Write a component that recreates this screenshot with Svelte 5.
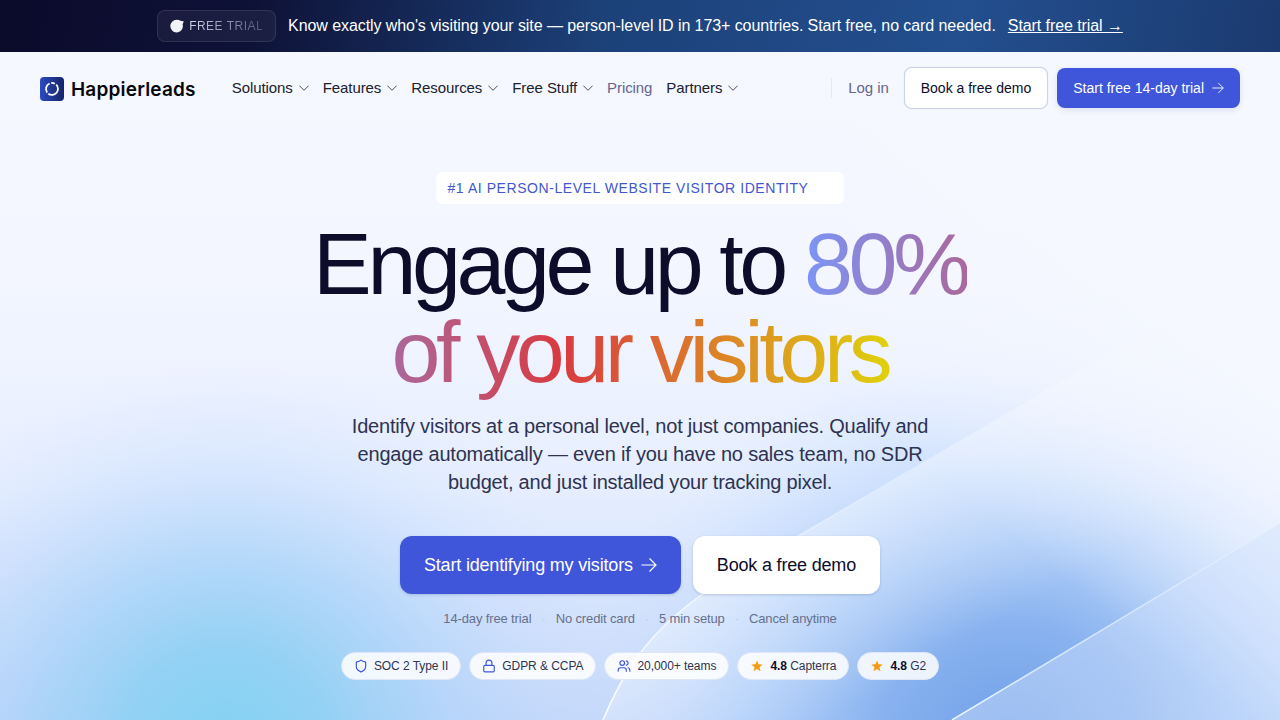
<script lang="ts">
  type Badge = { icon: "shield" | "lock" | "users" | "star"; label: string; score?: string };

  const navItems = [
    { label: "Solutions", menu: true },
    { label: "Features", menu: true },
    { label: "Resources", menu: true },
    { label: "Free Stuff", menu: true },
    { label: "Pricing", menu: false },
    { label: "Partners", menu: true },
  ];

  const perks = ["14-day free trial", "No credit card", "5 min setup", "Cancel anytime"];

  const badges: Badge[] = [
    { icon: "shield", label: "SOC 2 Type II" },
    { icon: "lock", label: "GDPR & CCPA" },
    { icon: "users", label: "20,000+ teams" },
    { icon: "star", label: "Capterra", score: "4.8" },
    { icon: "star", label: "G2", score: "4.8" },
  ];
</script>

{#snippet arrow(size: number)}
  <svg class="arrow" width={size} height={size} viewBox="0 0 16 16" aria-hidden="true">
    <path d="M.5 8h14.500M8.500 1.500 15 8l-6.500 6.500" />
  </svg>
{/snippet}

<div class="page">
  <aside class="promo">
    <span class="promo-tag">
      <svg width="14" height="14" viewBox="0 0 14 14" aria-hidden="true">
        <path d="M6.500.800A6.300 6.300 0 1 0 12.900 7.500c0-.9 0-1.300-.3-2l1.200-3.300-2.600-.3C9.600 1.200 8 .8 6.500.8z" fill="#f2f3f7" />
      </svg>
      <span class="promo-tag-text">FREE TRIAL</span>
    </span>
    <p>Know exactly who's visiting your site — person-level ID in 173+ countries. Start free, no card needed.</p>
    <a href="#trial">Start free trial →</a>
  </aside>

  <div class="stage">
    <svg class="backdrop" viewBox="0 0 1280 668" preserveAspectRatio="none" aria-hidden="true">
      <defs>
        <radialGradient id="cyan">
          <stop offset="0" stop-color="#83d2f2" />
          <stop offset=".25" stop-color="#8dd0f3" stop-opacity=".9" />
          <stop offset=".5" stop-color="#9fd0f8" stop-opacity=".6" />
          <stop offset=".75" stop-color="#b4d4fb" stop-opacity=".25" />
          <stop offset="1" stop-color="#cfe0ff" stop-opacity="0" />
        </radialGradient>
        <radialGradient id="blue">
          <stop offset="0" stop-color="#6f9fe8" />
          <stop offset=".3" stop-color="#7dabed" stop-opacity=".85" />
          <stop offset=".65" stop-color="#a3c9f9" stop-opacity=".5" />
          <stop offset="1" stop-color="#cfe3ff" stop-opacity="0" />
        </radialGradient>
        <linearGradient id="base" x1="0" y1="0" x2="0" y2="1">
          <stop offset="0" stop-color="#f5f8ff" />
          <stop offset=".35" stop-color="#f3f6ff" />
          <stop offset=".65" stop-color="#e6eeff" />
          <stop offset="1" stop-color="#c4d8fa" />
        </linearGradient>
        <linearGradient id="veil" gradientUnits="userSpaceOnUse" x1="860" y1="448" x2="950" y2="600">
          <stop offset="0" stop-color="#f5f8ff" stop-opacity=".45" />
          <stop offset="1" stop-color="#f5f8ff" stop-opacity="0" />
        </linearGradient>
        <linearGradient id="glow" gradientUnits="userSpaceOnUse" x1="1260" y1="320" x2="1080" y2="540">
          <stop offset="0" stop-color="#f5f8ff" />
          <stop offset=".5" stop-color="#f4f7ff" stop-opacity=".55" />
          <stop offset="1" stop-color="#f4f7ff" stop-opacity="0" />
        </linearGradient>
        <linearGradient id="edge" gradientUnits="userSpaceOnUse" x1="620" y1="668" x2="960" y2="390">
          <stop offset="0" stop-color="#fff" stop-opacity=".9" />
          <stop offset="1" stop-color="#fff" stop-opacity="0" />
        </linearGradient>
        <linearGradient id="edge-low" gradientUnits="userSpaceOnUse" x1="952" y1="668" x2="1290" y2="465">
          <stop offset="0" stop-color="#e9f6ff" />
          <stop offset="1" stop-color="#e9f6ff" stop-opacity=".3" />
        </linearGradient>
      </defs>
      <rect width="1280" height="668" fill="url(#base)" />
      <ellipse cx="225" cy="690" rx="390" ry="380" fill="url(#cyan)" />
      <ellipse cx="1010" cy="690" rx="430" ry="400" fill="url(#blue)" />
      <rect width="1280" height="668" fill="url(#glow)" />
      <path d="M603 668C632 600 665 553 800 483L1280 200V471L952 668z" fill="url(#veil)" />
      <path d="M603 668C632 600 665 553 800 483L1280 200" fill="none" stroke="url(#edge)" stroke-width="1.500" />
      <path d="M952 668L1280 471V668z" fill="#d3e3fc" fill-opacity=".45" />
      <path d="M952 668L1280 471" fill="none" stroke="url(#edge-low)" stroke-width="1.500" />
    </svg>

    <header class="topbar">
      <a class="brand" href="#home">
        <svg width="24" height="24" viewBox="0 0 24 24" aria-hidden="true">
          <defs>
            <linearGradient id="mark" x1="0" y1="0" x2="1" y2="0">
              <stop offset="0" stop-color="#2c4bc0" />
              <stop offset="1" stop-color="#152468" />
            </linearGradient>
          </defs>
          <rect width="24" height="24" rx="4" fill="url(#mark)" />
          <path
            d="M9.600 6.500A6 6 0 0 0 7.200 15.600M8.300 16.700A6 6 0 0 0 16.200 7.700M14.800 6.700A6 6 0 0 0 11.300 6"
            fill="none"
            stroke="#fff"
            stroke-width="1.800"
          />
        </svg>
        <span>Happierleads</span>
      </a>
      <nav aria-label="Main">
        {#each navItems as item}
          {#if item.menu}
            <button type="button" class="nav-item">
              {item.label}
              <svg width="10" height="6" viewBox="0 0 10 6" aria-hidden="true"><path d="M.4.700 5 5.300 9.600.700" /></svg>
            </button>
          {:else}
            <a class="nav-item muted" href="#pricing">{item.label}</a>
          {/if}
        {/each}
      </nav>
      <div class="actions">
        <a class="login" href="#login">Log in</a>
        <button type="button" class="btn light">Book a free demo</button>
        <button type="button" class="btn primary">Start free 14-day trial {@render arrow(12)}</button>
      </div>
    </header>

    <main class="hero">
      <div class="eyebrow">#1 AI PERSON-LEVEL WEBSITE VISITOR IDENTITY</div>
      <h1>Engage up to <span>80%<br />of your visitors</span></h1>
      <p class="lead">
        Identify visitors at a personal level, not just companies. Qualify and engage automatically — even if you have
        no sales team, no SDR budget, and just installed your tracking pixel.
      </p>
      <div class="cta">
        <button type="button" class="btn large primary">Start identifying my visitors {@render arrow(16)}</button>
        <button type="button" class="btn large light">Book a free demo</button>
      </div>
      <ul class="perks">
        {#each perks as perk}
          <li>{perk}</li>
        {/each}
      </ul>
      <ul class="badges">
        {#each badges as badge}
          <li>
            <svg class={badge.icon} width="14" height="14" viewBox="0 0 24 24" aria-hidden="true">
              {#if badge.icon === "shield"}
                <path d="M20 13c0 5-3.500 7.500-7.700 9a1 1 0 0 1-.6 0C7.500 20.500 4 18 4 13V6a1 1 0 0 1 1-1c2 0 4.500-1.200 6.200-2.700a1.200 1.200 0 0 1 1.600 0C14.500 3.800 17 5 19 5a1 1 0 0 1 1 1z" />
              {:else if badge.icon === "lock"}
                <rect x="3" y="11" width="18" height="11" rx="2" />
                <path d="M7 11V7a5 5 0 0 1 10 0v4" />
              {:else if badge.icon === "users"}
                <circle cx="9" cy="7" r="4" />
                <path d="M2 21v-2a4 4 0 0 1 4-4h6a4 4 0 0 1 4 4v2M16 3.100a4 4 0 0 1 0 7.800M22 21v-2a4 4 0 0 0-3-3.900" />
              {:else}
                <path d="M12 2.500l2.600 6.700 7.100.4-5.500 4.600L18 21.200 12 17.300 6 21.200l1.800-7L2.300 9.600l7.100-.4z" />
              {/if}
            </svg>
            <span>{#if badge.score}<strong>{badge.score}</strong>{" "}{/if}{badge.label}</span>
          </li>
        {/each}
      </ul>
    </main>
  </div>
</div>

<style>
  :global(body) {
    margin: 0;
  }

  .page {
    display: flex;
    flex-direction: column;
    min-height: 100vh;
    font-family: "Liberation Sans", Arial, sans-serif;
    color: #0d0d2b;
  }

  a {
    color: inherit;
    text-decoration: none;
  }

  button {
    font: inherit;
    letter-spacing: inherit;
    color: inherit;
    cursor: pointer;
  }

  ul {
    margin: 0;
    padding: 0;
    list-style: none;
  }

  svg {
    flex: none;
  }

  .promo {
    display: flex;
    align-items: center;
    justify-content: center;
    gap: 12px;
    padding: 10px 24px;
    background: linear-gradient(100deg, #0b0b2b 0%, #0e1237 20%, #1c4179 47%, #234f8e 75%, #1b3a70 100%);
    color: #fff;
    font-size: 16px;
    line-height: 24px;
    letter-spacing: -0.005em;
  }

  .promo p {
    margin: 0;
  }

  .promo a {
    text-decoration: underline;
    text-underline-offset: 1px;
  }

  .promo-tag {
    display: flex;
    align-items: center;
    gap: 5px;
    box-sizing: border-box;
    height: 32px;
    padding: 0 12px;
    border: 1px solid #ffffff1a;
    border-radius: 8px;
    background: #ffffff0d;
    font-size: 12px;
    letter-spacing: 0.04em;
  }

  .promo-tag-text {
    background: linear-gradient(90deg, #d4d8e8, #4c5376);
    background-clip: text;
    color: transparent;
  }

  .stage {
    position: relative;
    flex: 1;
  }

  .backdrop {
    position: absolute;
    inset: 0;
    width: 100%;
    height: 100%;
  }

  .topbar {
    position: relative;
    display: flex;
    align-items: center;
    padding: 15px 40px;
  }

  .brand {
    display: flex;
    align-items: center;
    gap: 7px;
    margin-right: 36px;
    padding-top: 2px;
    font-family: Inter, sans-serif;
    font-size: 19px;
    font-weight: 600;
    letter-spacing: 0.01em;
    color: #08080c;
  }

  nav {
    display: flex;
    gap: 14px;
    letter-spacing: -0.005em;
  }

  .nav-item {
    display: flex;
    align-items: center;
    gap: 6px;
    padding: 0;
    border: 0;
    background: none;
    color: #20212b;
    font-size: 15px;
    line-height: 20px;
  }

  .nav-item.muted,
  .login {
    color: #66668a;
  }

  .nav-item path {
    fill: none;
    stroke: #4c4f5c;
  }

  .actions {
    display: flex;
    align-items: center;
    gap: 9px;
    margin-left: auto;
  }

  .login {
    padding: 0 6px 0 16px;
    border-left: 1px solid #e4e8f4;
    font-size: 15px;
    line-height: 20px;
    letter-spacing: -0.005em;
  }

  .btn {
    display: flex;
    align-items: center;
    gap: 8px;
    padding: 11px 16px;
    border-radius: 8px;
    font-size: 14px;
    line-height: 18px;
    white-space: nowrap;
  }

  .btn.light {
    border: 1px solid #cdd3e6;
    background: #fff;
    box-shadow: 0 0 1px #cdd3e6;
  }

  .btn.primary {
    border: 0;
    background: #3f56da;
    color: #fff;
    box-shadow: 0 2px 6px #2030701f;
  }

  .arrow {
    fill: none;
    stroke: currentColor;
    stroke-width: 1.2;
  }

  .btn.large {
    padding: 18px 24px;
    border: 0;
    border-radius: 12px;
    font-size: 18px;
    line-height: 22px;
    letter-spacing: -0.01em;
    box-shadow: 0 1px 3px #20307033;
  }

  .hero {
    position: relative;
    display: flex;
    flex-direction: column;
    align-items: center;
    padding: 48px 24px 40px;
    text-align: center;
  }

  .eyebrow {
    padding: 0 36px 0 12px;
    border-radius: 6px;
    background: #fff;
    color: #4257cf;
    font-size: 14px;
    line-height: 32px;
    letter-spacing: 0.04em;
  }

  h1 {
    margin: 16px 0 0;
    font-size: 88px;
    font-weight: 400;
    line-height: 88px;
    letter-spacing: -0.05em;
  }

  /* the tight tracking would clip the last letter of the gradient */
  h1 span {
    margin-right: -4px;
    padding-right: 4px;
    background: linear-gradient(90deg, #7c95f6, #d93a40 50%, #dfd20c);
    background-clip: text;
    color: transparent;
  }

  .lead {
    max-width: 600px;
    margin: 16px 0 40px;
    color: #2e3350;
    font-size: 20px;
    line-height: 28px;
    letter-spacing: -0.01em;
  }

  .cta {
    display: flex;
    gap: 12px;
  }

  .perks {
    display: flex;
    margin-top: 16px;
    color: #66708c;
    font-size: 13px;
    line-height: 18px;
    letter-spacing: -0.01em;
  }

  .perks li + li::before {
    content: "·";
    margin: 0 10px;
    color: #c0cbe2;
  }

  .badges {
    display: flex;
    gap: 8px;
    margin-top: 24px;
  }

  .badges li {
    display: flex;
    align-items: center;
    gap: 6px;
    padding: 5px 12px;
    border: 1px solid #dfe6f6;
    border-radius: 999px;
    background: #ffffffd9;
    color: #2e3350;
    font-size: 12px;
    line-height: 16px;
    letter-spacing: -0.005em;
  }

  .badges strong {
    color: #0d0d2b;
  }

  .badges svg {
    fill: none;
    stroke: #3f56da;
    stroke-width: 2;
    stroke-linecap: round;
    stroke-linejoin: round;
  }

  .badges svg.star {
    fill: #f39c12;
    stroke: none;
  }
</style>
